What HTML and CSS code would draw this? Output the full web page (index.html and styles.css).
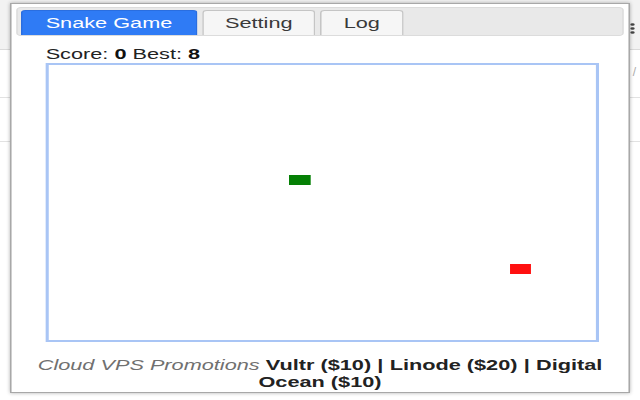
FILE: index.html
```html
<!DOCTYPE html>
<html>
<head>
<meta charset="utf-8">
<title>Snake Game</title>
<link rel="stylesheet" href="styles.css">
</head>
<body>
<div class="page">
  <div class="toolbar">
    <svg class="menu" width="5" height="11" viewBox="0 0 5 11"><ellipse cx="2.5" cy="1.5" rx="2.2" ry="1.3" fill="#444"/><ellipse cx="2.5" cy="5.5" rx="2.2" ry="1.3" fill="#444"/><ellipse cx="2.5" cy="9.5" rx="2.2" ry="1.3" fill="#444"/></svg>
  </div>
  <div class="row row-a"><span class="slash">/</span></div>
  <div class="row row-b"></div>
</div>
<div class="popup">
  <div class="tabs">
    <div class="tab active">Snake Game</div>
    <div class="tab">Setting</div>
    <div class="tab">Log</div>
  </div>
  <div class="game">
    <div class="score">Score: <b>0</b> Best: <b>8</b></div>
    <div class="board">
      <svg width="353" height="275" viewBox="0 0 353 275">
        <rect x="155" y="110" width="14" height="10" fill="#058005"/>
        <rect x="297.6" y="199" width="13.5" height="10" fill="#ff1010"/>
      </svg>
    </div>
  </div>
  <p class="promo"><span class="label">Cloud VPS Promotions</span><a href="#">Vultr ($10)</a><span class="sep">|</span><a href="#">Linode ($20)</a><span class="sep">|</span><a href="#"><span class="word">Digital</span> <span class="word">Ocean ($10)</span></a></p>
</div>
</body>
</html>
```
FILE: styles.css
```css
html, body {
  margin: 0;
  height: 100%;
  overflow: hidden;
}
body {
  position: relative;
  background: #fff;
  font-family: "Liberation Sans", Arial, sans-serif;
}
.toolbar {
  height: 49px;
  background: #f2f2f2;
  border-bottom: 1px solid #dadada;
  display: flex;
  justify-content: flex-end;
  align-items: flex-start;
}
.menu {
  margin: 23px 5px 0 0;
}
.row {
  border-bottom: 1px solid #e2e2e2;
  display: flex;
  justify-content: flex-end;
  align-items: flex-start;
}
.row-a {
  height: 47px;
}
.row-b {
  height: 43px;
}
.slash {
  font-size: 12px;
  color: #aaa;
  margin: 15px 4px 0 0;
}
.popup {
  position: absolute;
  left: 10px;
  top: 3px;
  width: 400px;
  box-sizing: border-box;
  padding: 3px 3px 2px;
  background: #fff;
  border: 1px solid #a8a8a8;
  box-shadow: 0 0 3px rgba(0, 0, 0, 0.3);
  transform: scaleX(1.55);
  transform-origin: 0 0;
}
.tabs {
  display: flex;
  align-items: flex-end;
  gap: 3px;
  height: 25px;
  padding: 2px 2px 0;
  border: 1px solid #dcdcdc;
  background: #e9e9e9;
  border-radius: 3px;
}
.tab {
  height: 25px;
  box-sizing: border-box;
  padding: 0 14px;
  display: flex;
  align-items: center;
  font-size: 14px;
  color: #3a3a3a;
  background: #f6f6f6;
  border: 1px solid #c5c5c5;
  border-bottom: none;
  border-radius: 3px 3px 0 0;
}
.tab.active {
  padding: 0 15px;
  color: #fff;
  background: #2f7bf5;
  border-color: #2a6ee0;
}
.game {
  padding: 10px 0 0 19px;
}
.score {
  font-size: 14px;
  line-height: 17px;
  color: #222;
}
.score b {
  color: #111;
}
.board {
  width: 353px;
  height: 275px;
  border: 2px solid #a9c5f5;
}
.board svg {
  display: block;
}
.promo {
  margin: 15px 0 0;
  text-align: center;
  font-size: 14px;
  line-height: 16.5px;
  color: #222;
}
.promo .label {
  font-style: italic;
  color: #707070;
  margin-right: 4px;
}
.promo a,
.promo .sep {
  font-weight: bold;
  color: #222;
  text-decoration: none;
}
.promo .sep {
  margin: 0 4px;
}
```
